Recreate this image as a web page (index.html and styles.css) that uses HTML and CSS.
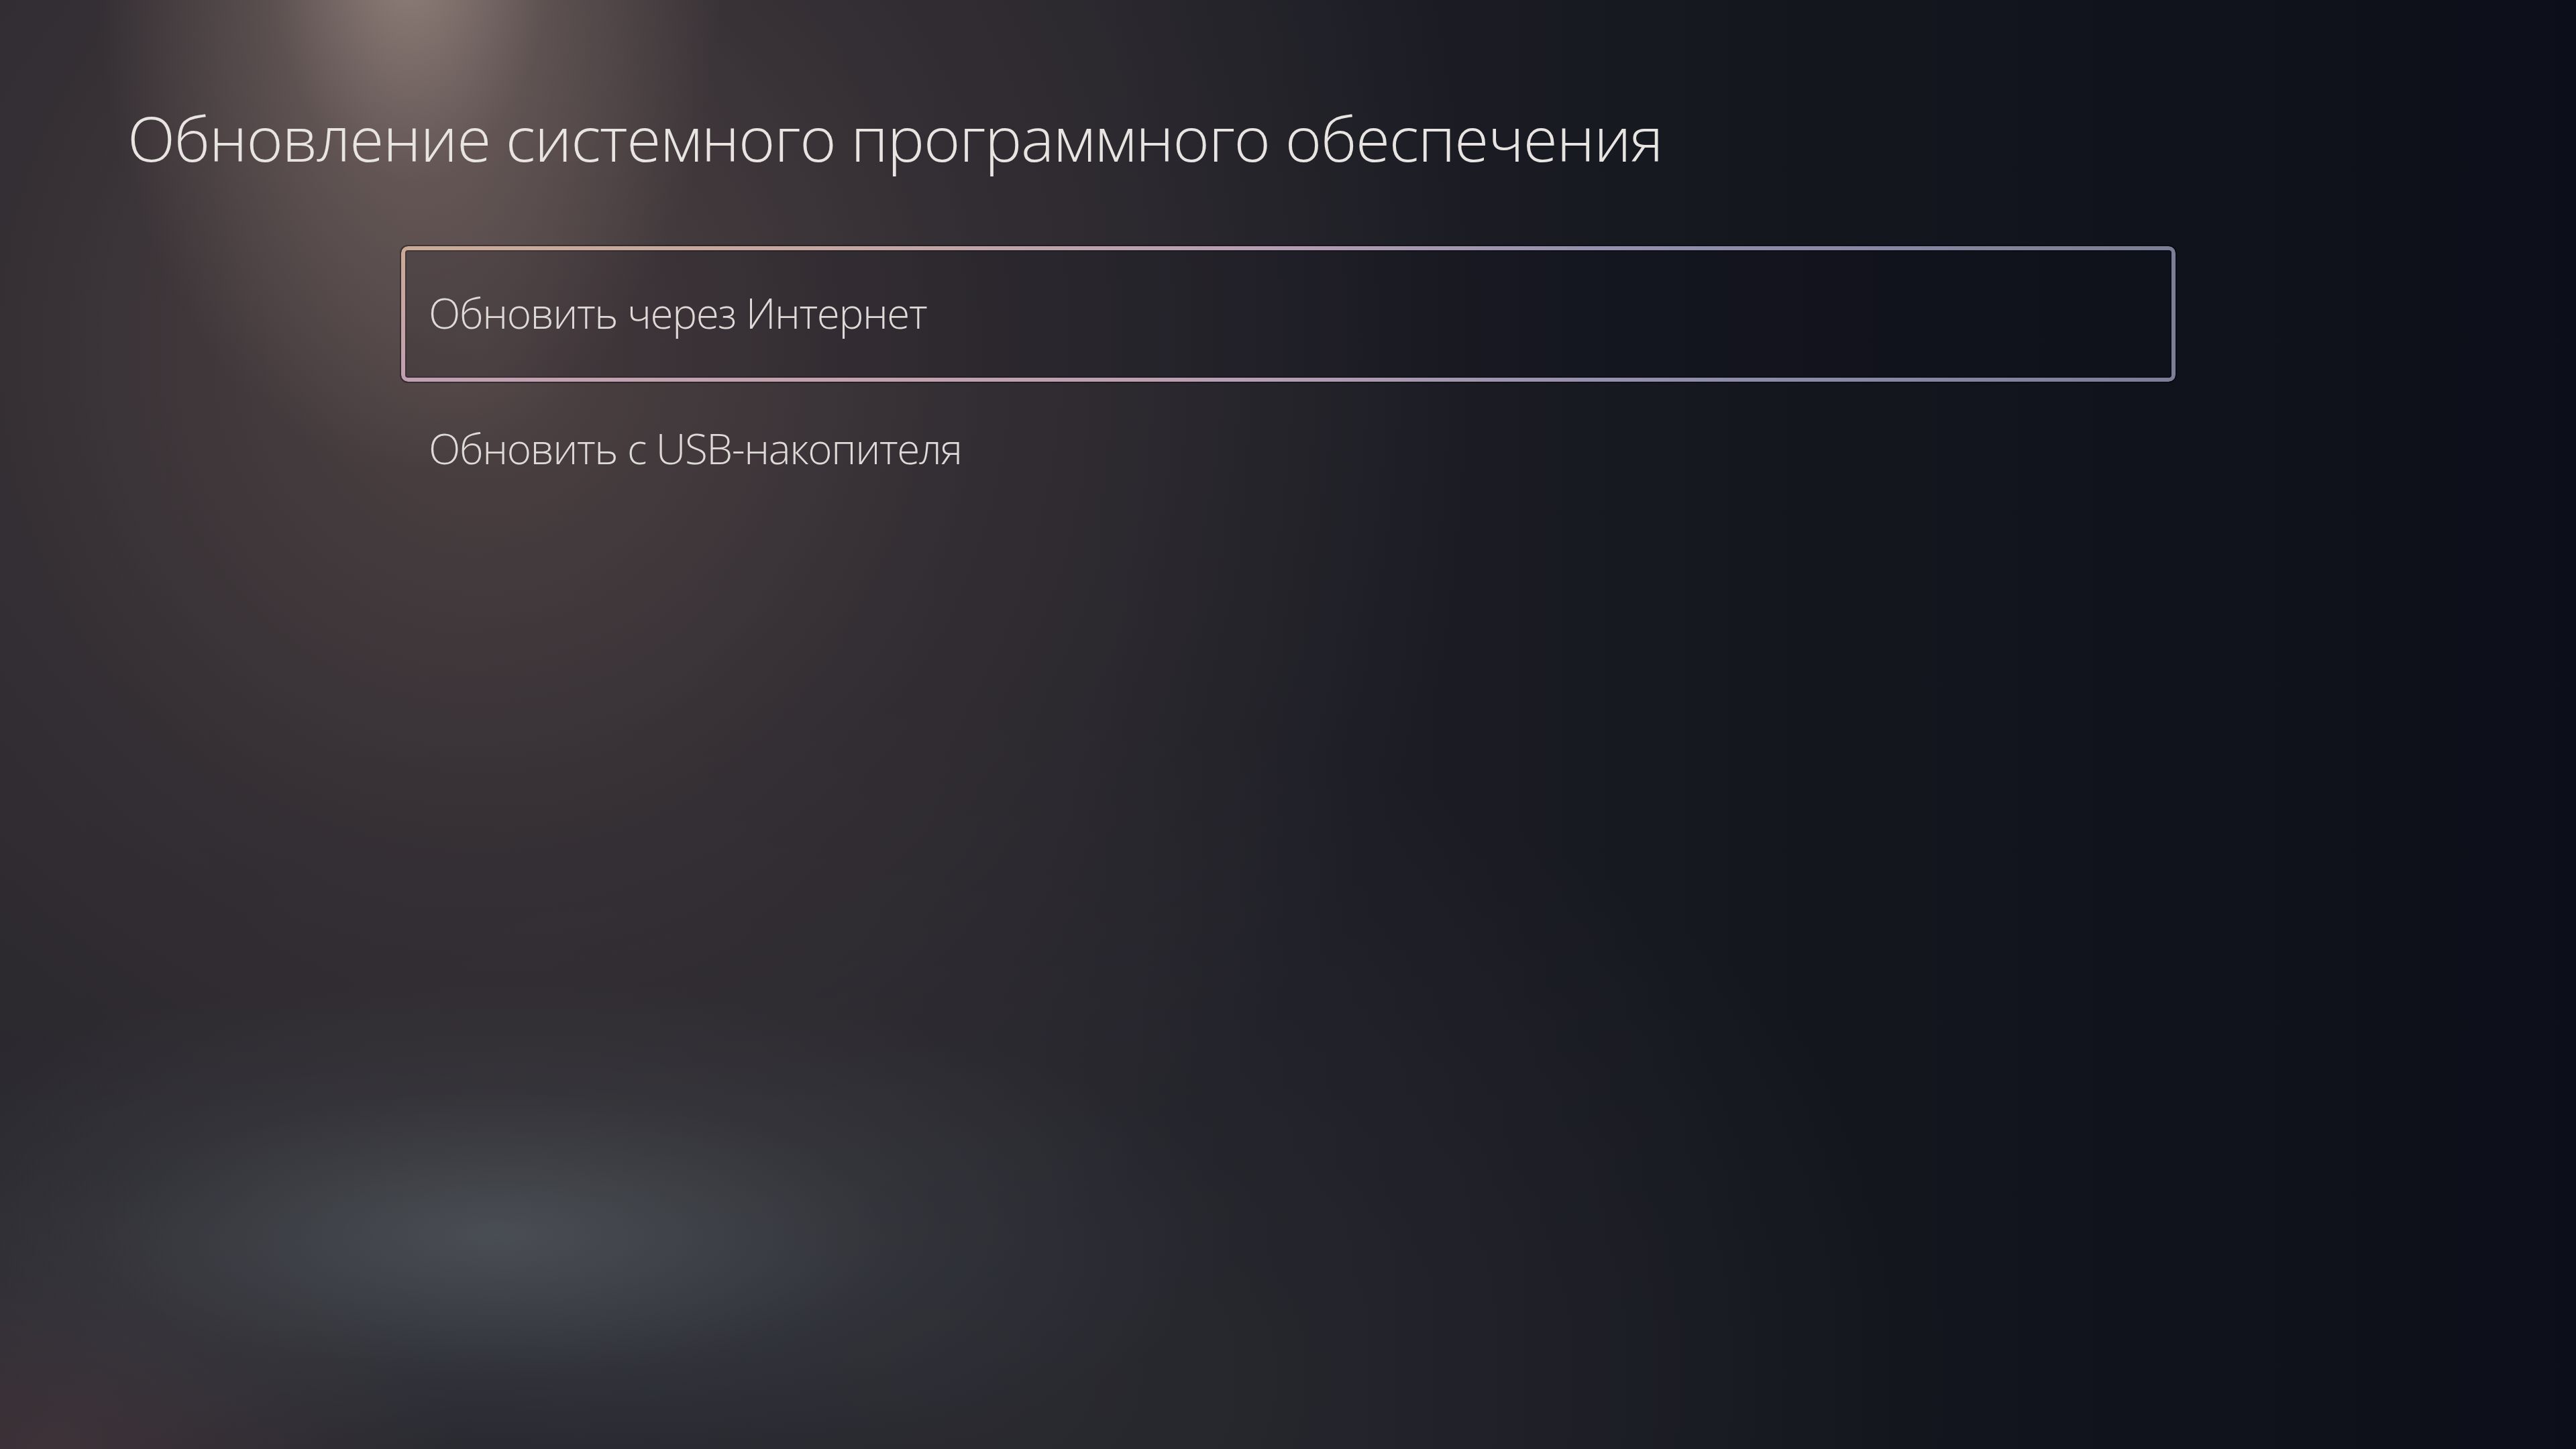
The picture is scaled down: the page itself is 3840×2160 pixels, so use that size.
FILE: index.html
```html
<!DOCTYPE html>
<html lang="ru">
<head>
    <meta charset="UTF-8">
    <meta name="viewport" content="width=device-width, initial-scale=1.0">
    <title>Обновление системного программного обеспечения</title>
    <link rel="stylesheet" href="styles.css">
</head>
<body>
    <main class="screen">
        <h1 class="screen-title">Обновление системного программного обеспечения</h1>

        <ul class="menu">
            <li class="menu-item is-focused">Обновить через Интернет</li>
            <li class="menu-item">Обновить с USB-накопителя</li>
        </ul>
    </main>
</body>
</html>
```

FILE: styles.css
```css
html, body {
    margin: 0;
    padding: 0;
    height: 100%;
}

body {
    font-family: "Open Sans", "Noto Sans", sans-serif;
    font-weight: 300;
    color: #e4e0de;
    overflow: hidden;
    background-color: #0f121b;
    background-image:
        /* spotlight from above */
        radial-gradient(ellipse 470px 780px at 610px -80px, rgba(176, 156, 146, 0.76), rgba(146, 126, 120, 0.38) 45%, rgba(120, 100, 98, 0) 100%),
        /* warm haze below the light */
        radial-gradient(ellipse 1500px 1600px at 720px 520px, rgba(86, 72, 72, 0.85), rgba(70, 60, 62, 0.45) 50%, rgba(60, 52, 56, 0) 100%),
        /* cold floor reflection */
        radial-gradient(ellipse 1100px 380px at 740px 1840px, rgba(78, 86, 92, 0.9), rgba(60, 66, 72, 0.4) 55%, rgba(50, 54, 60, 0) 100%),
        /* warm corner bottom left */
        radial-gradient(ellipse 600px 420px at 80px 2160px, rgba(72, 56, 62, 0.7), rgba(72, 56, 62, 0) 100%),
        radial-gradient(ellipse 1500px 1000px at 1400px 2050px, rgba(44, 44, 50, 0.8), rgba(44, 44, 50, 0) 100%),
        linear-gradient(to right, #25242b 0%, #212129 42%, #15171f 68%, #0c0f19 100%);
}

.screen {
    padding: 150px 0 0 190px;
}

.screen-title {
    margin: 0 0 105px;
    font-size: 93px;
    font-weight: 300;
    line-height: 1.2;
    color: #e8e4e2;
    letter-spacing: -1.3px;
}

.menu {
    list-style: none;
    margin: 0 0 0 408px;
    padding: 0;
    width: 2645px;
    display: flex;
    flex-direction: column;
}

.menu-item {
    position: relative;
    box-sizing: border-box;
    height: 202px;
    display: flex;
    align-items: center;
    padding: 0 40px 4px 41px;
    font-size: 62px;
    letter-spacing: -1.4px;
    color: #dedad8;
    border-radius: 10px;
}

.menu-item.is-focused {
    background: rgba(8, 10, 18, 0.14);
    box-shadow: 0 0 0 2px rgba(0, 0, 0, 0.35), inset 0 0 0 8px rgba(0, 0, 0, 0.2);
}

/* gradient frame around the focused row */
.menu-item.is-focused::before {
    content: "";
    position: absolute;
    inset: 0;
    padding: 6px;
    border-radius: 10px;
    background:
        radial-gradient(ellipse 1500px 200px at 0 100%, rgba(190, 156, 190, 0.75), rgba(190, 156, 190, 0) 100%),
        linear-gradient(to right, #cbaa96 0%, #c6a6a2 25%, #b69eb2 48%, #9490ae 68%, #7c7d97 100%);
    -webkit-mask: linear-gradient(#000 0 0) content-box, linear-gradient(#000 0 0);
    -webkit-mask-composite: xor;
    mask-composite: exclude;
}
```
